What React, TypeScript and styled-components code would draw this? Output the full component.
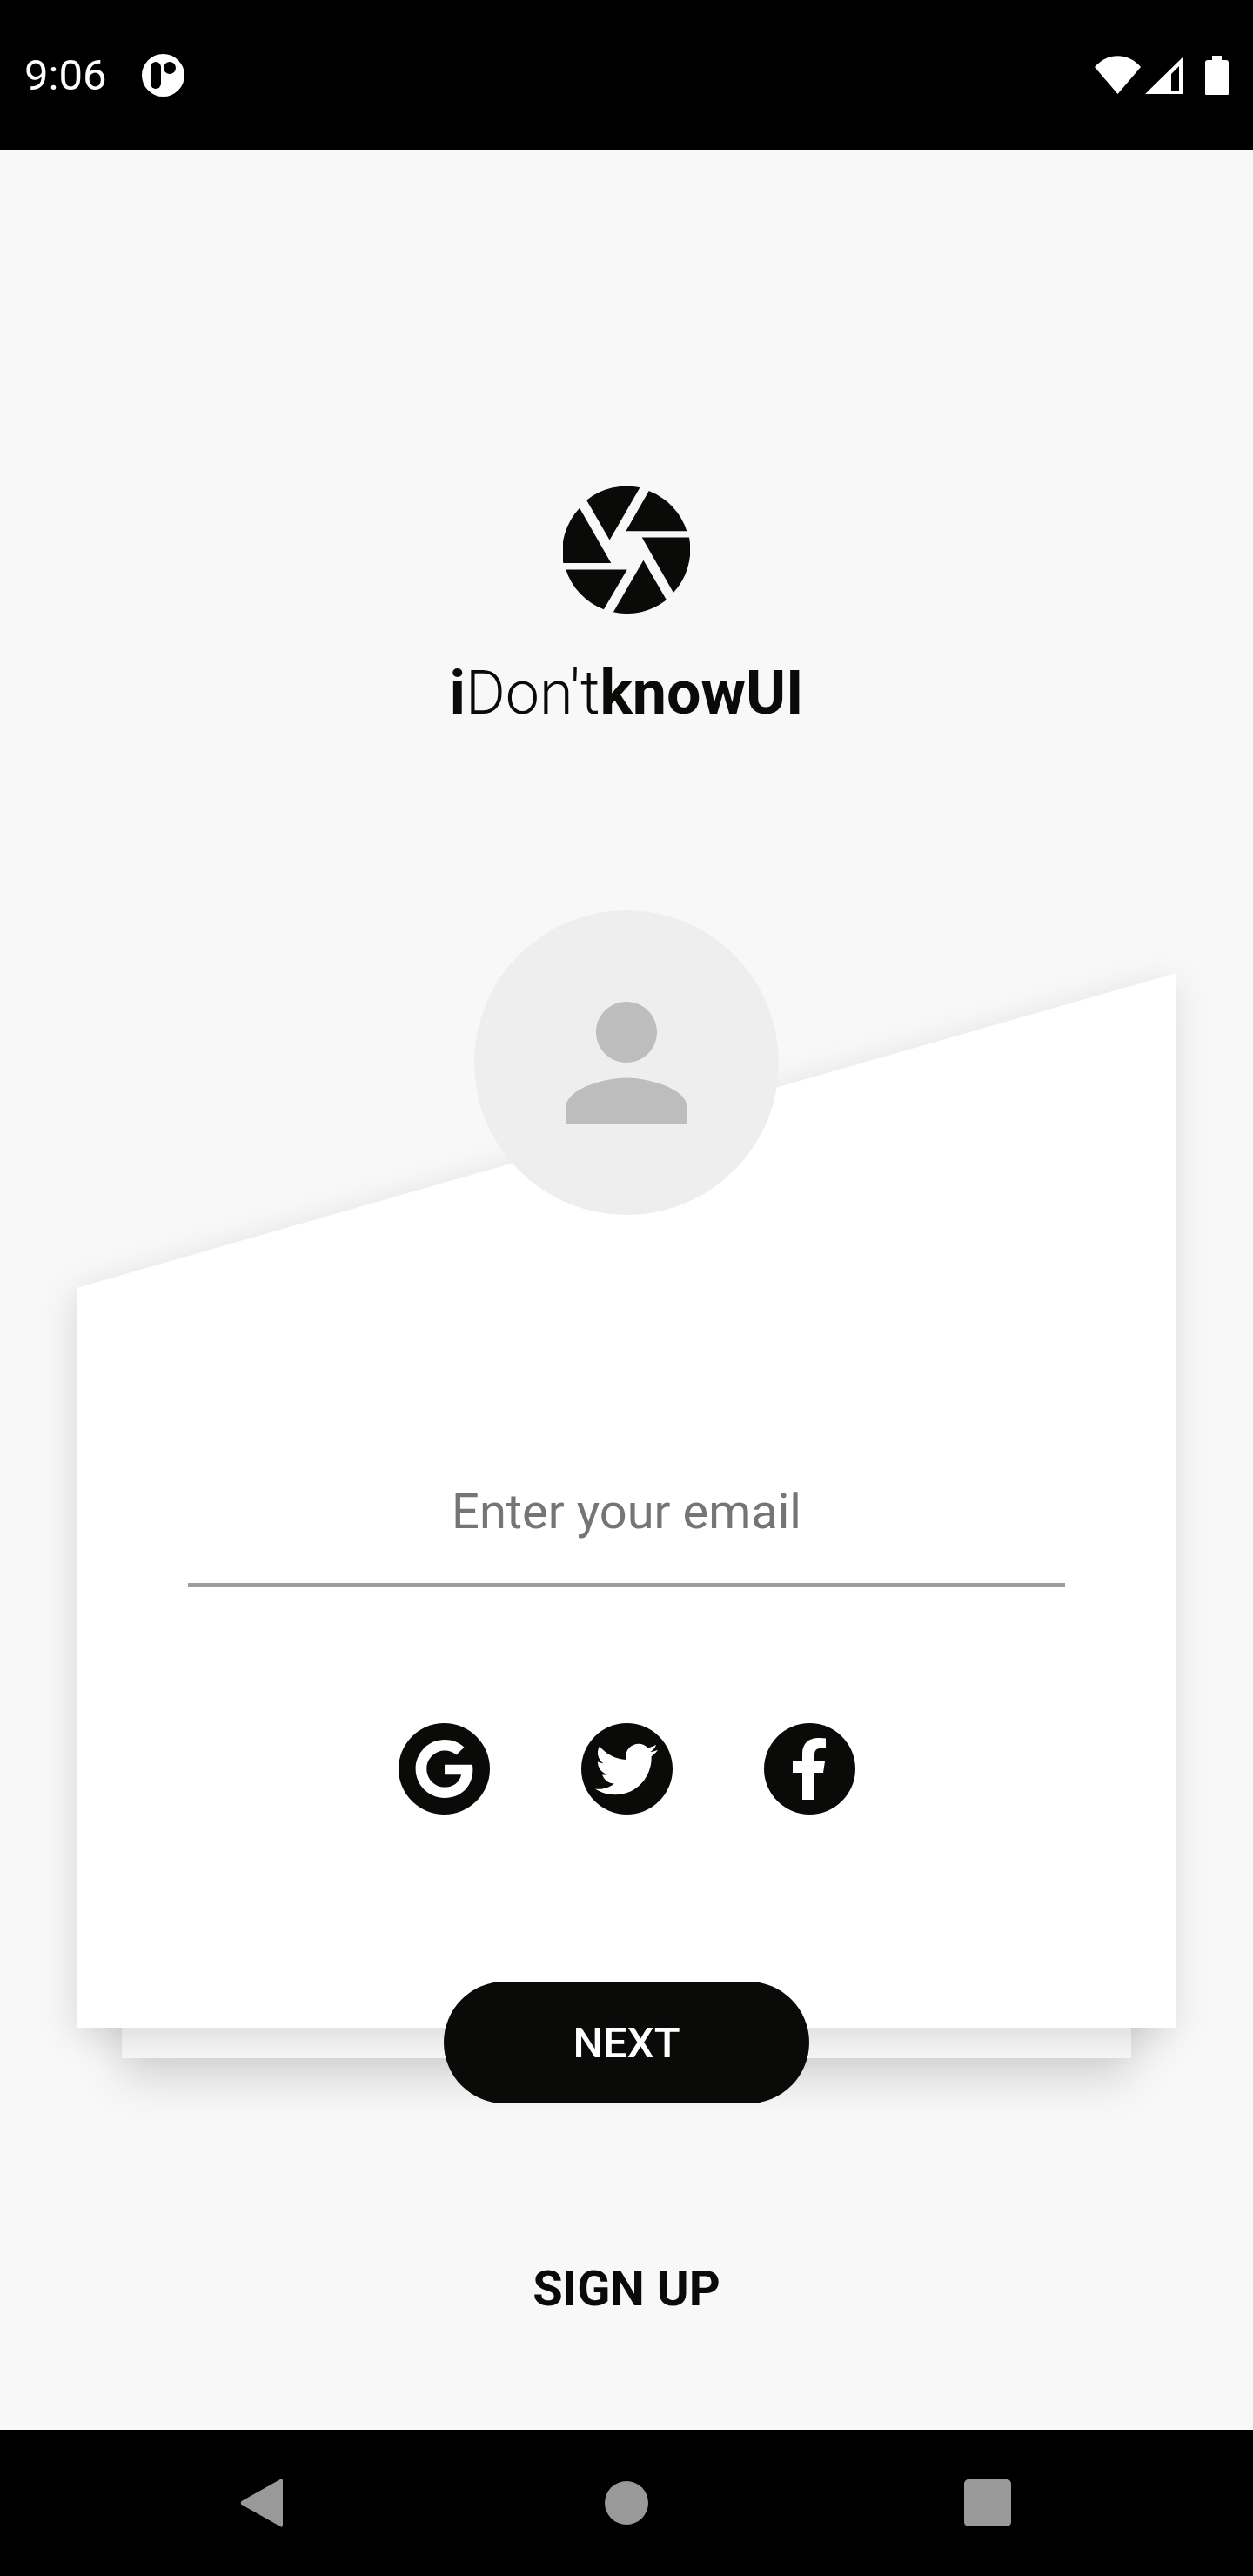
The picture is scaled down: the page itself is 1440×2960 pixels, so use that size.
import React from "react";
import styled, { createGlobalStyle } from "styled-components";
import { FaGoogle, FaTwitter } from "react-icons/fa";

const Global = createGlobalStyle`
  html, body { margin: 0; padding: 0; background: #000; }
  * { box-sizing: border-box; }
`;

const Page = styled.div`
  width: 1440px;
  height: 2960px;
  display: flex;
  flex-direction: column;
  overflow: hidden;
  font-family: Roboto, "Liberation Sans", sans-serif;
  background: #f8f8f8;
  color: #0a0a08;
`;

const StatusBar = styled.header`
  height: 172px;
  flex: none;
  background: #000;
  color: #fff;
  display: flex;
  align-items: center;
  justify-content: space-between;
  padding: 0 28px 0 28px;
`;

const StatusLeft = styled.div`
  display: flex;
  align-items: center;
  gap: 41px;
`;

const Clock = styled.span`
  font-size: 49px;
  line-height: 57px;
  font-weight: 400;
`;

const StatusRight = styled.div`
  display: flex;
  align-items: center;
`;

const Main = styled.main`
  flex: 1;
  display: flex;
  flex-direction: column;
  align-items: center;
`;

const Logo = styled.svg`
  width: 146px;
  height: 146px;
  margin-top: 387px;
  fill: #0a0a08;
`;

const Wordmark = styled.h1`
  margin: 50px 0 0;
  font-size: 70px;
  line-height: 82px;
  font-weight: 300;
`;

const Strong = styled.span`
  font-weight: 700;
`;

const CardStack = styled.section`
  position: relative;
  width: 1264px;
  margin-top: 281px;
`;

const BackCard = styled.div`
  position: absolute;
  left: 52px;
  right: 52px;
  bottom: -35px;
  height: 200px;
  background: #f8f8f8;
  box-shadow: 0 20px 50px rgba(0, 0, 0, 0.17);
`;

const CardShadow = styled.div`
  position: relative;
  filter: drop-shadow(-3px 10px 20px rgba(0, 0, 0, 0.12));
`;

const CardFace = styled.div`
  height: 1212px;
  background: #fff;
  clip-path: polygon(0 362px, 100% 0, 100% 100%, 0 100%);
  padding: 586px 128px 0;
`;

const EmailField = styled.div`
  height: 119px;
  border-bottom: 4px solid #9e9e9e;
  font-size: 56px;
  line-height: 66px;
  text-align: center;
  color: #757575;
`;

const SocialRow = styled.div`
  display: flex;
  justify-content: center;
  gap: 105px;
  margin-top: 157px;
`;

const SocialButton = styled.div`
  width: 105px;
  height: 105px;
  border-radius: 50%;
  background: #0a0a08;
  color: #fff;
  display: flex;
  align-items: center;
  justify-content: center;
`;

const Avatar = styled.div`
  position: absolute;
  top: -72px;
  left: 457px;
  width: 350px;
  height: 350px;
  border-radius: 50%;
  background: #eeeeee;
  display: flex;
  align-items: center;
  justify-content: center;
`;

const NextButton = styled.button`
  position: absolute;
  left: 422px;
  bottom: -87px;
  width: 420px;
  height: 140px;
  border: 0;
  border-radius: 70px;
  background: #0a0a08;
  color: #fff;
  font-family: inherit;
  font-size: 49px;
  font-weight: 500;
  padding: 0;
`;

const SignUp = styled.button`
  margin-top: 267px;
  border: 0;
  background: none;
  padding: 0;
  color: #0a0a08;
  font-family: inherit;
  font-size: 56px;
  line-height: 66px;
  font-weight: 700;
`;

const NavBar = styled.footer`
  height: 168px;
  flex: none;
  background: #000;
  display: flex;
  align-items: center;
  padding-left: 276px;
`;

const NavCircle = styled.div`
  width: 50px;
  height: 50px;
  margin-left: 369px;
  border-radius: 50%;
  background: #999;
`;

const NavSquare = styled.div`
  width: 54px;
  height: 54px;
  margin-left: 363px;
  border-radius: 5px;
  background: #999;
`;

export default function App() {
  return (
    <Page>
      <Global />
      <StatusBar>
        <StatusLeft>
          <Clock>9:06</Clock>
          <svg width="49" height="49" viewBox="0 0 49 49">
            <circle cx="24.5" cy="24.5" r="24.5" fill="#fff" />
            <rect x="10" y="9" width="12" height="31" rx="6" fill="#000" />
            <circle cx="32" cy="16" r="7" fill="#000" />
          </svg>
        </StatusLeft>
        <StatusRight>
          <svg width="154" height="46" viewBox="0 0 154 46" fill="#fff">
            <path d="M0 14 C14 -3 39 -3 53 14 L26.5 45 Z" />
            <path fillRule="evenodd" d="M58 45 L102 2 V45 Z M88 41 H97 V13 L88 22 Z" />
            <path d="M135 1 H146 V6 H151 Q154 6 154 9 V44 Q154 47 151 47 H130 Q127 47 127 44 V9 Q127 6 130 6 H135 Z" />
          </svg>
        </StatusRight>
      </StatusBar>
      <Main>
        <Logo viewBox="472 88 436 436">
          <path d="M553 135 A218 218 0 0 1 736 92 L632 272 Z" />
          <path d="M767 103 A218 218 0 0 1 897 241 L688 241 Z" />
          <path d="M743 263 L905 263 A218 218 0 0 1 851 452 Z" />
          <path d="M748 341 L827 477 A218 218 0 0 1 645 519 Z" />
          <path d="M692 373 L612 510 A218 218 0 0 1 482 373 Z" />
          <path d="M637 351 L473 351 A218 218 0 0 1 529 162 Z" />
        </Logo>
        <Wordmark>
          <Strong>i</Strong>Don't<Strong>knowUI</Strong>
        </Wordmark>
        <CardStack>
          <BackCard />
          <CardShadow>
            <CardFace>
              <EmailField>Enter your email</EmailField>
              <SocialRow>
                <SocialButton>
                  <FaGoogle size={69} />
                </SocialButton>
                <SocialButton>
                  <FaTwitter size={72} />
                </SocialButton>
                <SocialButton>
                  <svg width="38" height="71" viewBox="910 1994 38 71" fill="#fff">
                    <path d="M935 2065 V2034 H945 L947 2021 H935 V2013 C935 2009 937 2006 941 2006 H948 V1994.5 C946 1994.3 943 1994 939 1994 C929 1994 921 2000 921 2012 V2021 H910 V2034 H921 V2065 Z" />
                  </svg>
                </SocialButton>
              </SocialRow>
            </CardFace>
          </CardShadow>
          <Avatar>
            <svg width="210" height="210" viewBox="0 0 24 24" fill="#bdbdbd">
              <path d="M12 12c2.21 0 4-1.79 4-4s-1.79-4-4-4-4 1.79-4 4 1.79 4 4 4zm0 2c-2.67 0-8 1.34-8 4v2h16v-2c0-2.66-5.33-4-8-4z" />
            </svg>
          </Avatar>
          <NextButton>NEXT</NextButton>
        </CardStack>
        <SignUp>SIGN UP</SignUp>
      </Main>
      <NavBar>
        <svg width="50" height="56" viewBox="0 0 50 56" fill="#999">
          <path d="M49 3 Q49 -1 46 1 L1.5 26 Q0 28 1.5 30 L46 55 Q49 57 49 53 Z" />
        </svg>
        <NavCircle />
        <NavSquare />
      </NavBar>
    </Page>
  );
}
